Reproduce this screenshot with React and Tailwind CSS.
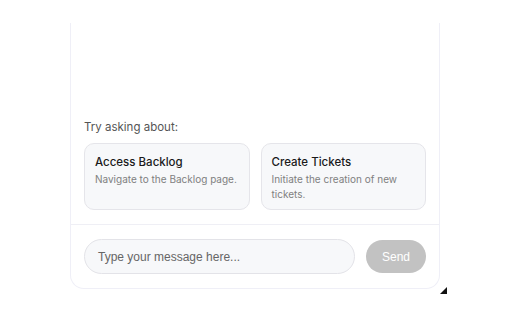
export default function App() {
  const suggestions = [
    { title: 'Access Backlog', desc: 'Navigate to the Backlog page.' },
    { title: 'Create Tickets', desc: 'Initiate the creation of new tickets.' },
  ]

  return (
    <div className="w-[512px] h-[320px] bg-white relative" style={{ fontFamily: 'Inter, "Noto Sans", sans-serif' }}>
      <div className="absolute left-[70px] top-[23px] w-[370px] flex flex-col border-x border-b border-[#efeff7] rounded-b-[14px] bg-white">
        <div className="h-[96px]" />
        <div className="px-[13px] pb-[14px]">
          <div className="text-[11.5px] text-[#555] mb-[8px] leading-[16px]">Try asking about:</div>
          <div className="grid grid-cols-2 gap-[11px]">
            {suggestions.map(s => (
              <div key={s.title} className="h-[67px] rounded-[10px] border border-[#e5e5ea] bg-[#f7f8fa] pl-[10px] pr-[5px] pt-[10px]">
                <div className="text-[11.5px] font-medium text-[#1a1a1a] leading-[16px]">{s.title}</div>
                <div className="text-[10px] text-[#808080] leading-[15px] mt-[2px]">{s.desc}</div>
              </div>
            ))}
          </div>
        </div>
        <div className="border-t border-[#efeff5] px-[13px] pt-[14px] pb-[14px] flex items-center gap-[11px]">
          <div className="flex-1 h-[35px] rounded-full border border-[#e3e3e8] bg-[#f7f8fa] flex items-center px-[13px] text-[12px] text-[#666]" style={{ fontFamily: '"Liberation Sans", Arial, sans-serif' }}>
            Type your message here...
          </div>
          <div className="w-[60px] h-[33px] rounded-full bg-[#c2c2c2] flex items-center justify-center text-[12px] text-white" style={{ fontFamily: '"Liberation Sans", Arial, sans-serif' }}>
            Send
          </div>
        </div>
      </div>
      <svg className="absolute left-[440px] top-[287px]" width="7" height="7" viewBox="0 0 7 7">
        <polygon points="7,0 7,7 0,7" fill="#111" />
      </svg>
    </div>
  )
}
